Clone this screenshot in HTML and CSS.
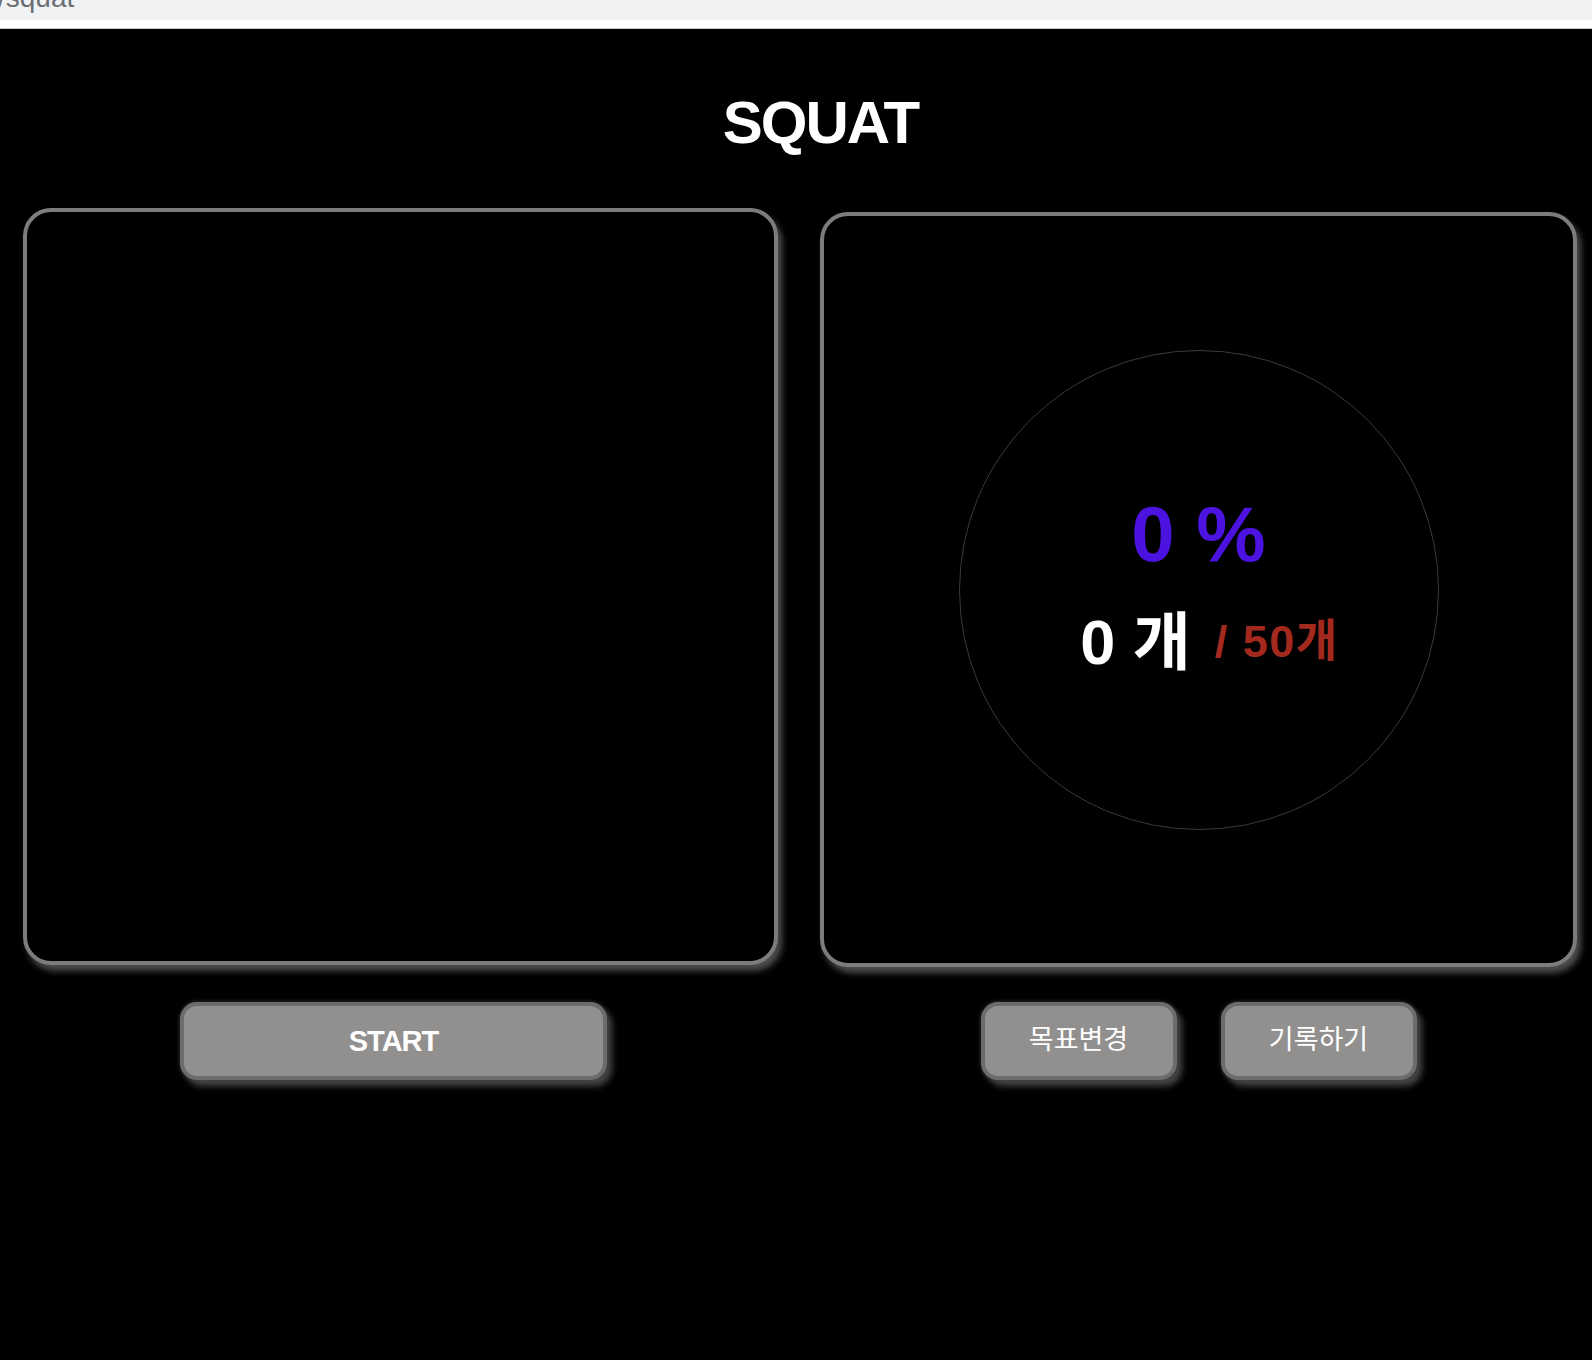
FILE: index.html
```html
<!DOCTYPE html>
<html lang="ko">
<head>
<meta charset="utf-8">
<title>Squat</title>
<link rel="stylesheet" href="styles.css">
</head>
<body>
<div class="chrome">
  <div class="chrome-bar"><span class="chrome-url">/squat</span></div>
  <div class="chrome-gap"></div>
</div>
<main class="page">
  <h1 class="title">SQUAT</h1>
  <div class="panels">
    <section class="panel panel-video"></section>
    <section class="panel panel-stats">
      <div class="ring">
        <div class="percent">0 %</div>
        <div class="count"><span class="count-now">0 개</span><span class="count-goal">/ 50개</span></div>
      </div>
    </section>
  </div>
  <div class="actions">
    <div class="action-col">
      <button class="btn btn-start">START</button>
    </div>
    <div class="action-col action-col-right">
      <button class="btn btn-small">목표변경</button>
      <button class="btn btn-small">기록하기</button>
    </div>
  </div>
</main>
</body>
</html>
```
FILE: styles.css
```css
html, body {
  margin: 0;
  padding: 0;
  background: #000;
}
body {
  width: 1592px;
  min-height: 1360px;
  font-family: "Liberation Sans", "Noto Sans CJK KR", sans-serif;
  color: #fff;
  overflow: hidden;
}
.chrome-bar {
  height: 20px;
  background: #f1f2f4;
  overflow: hidden;
}
.chrome-url {
  display: block;
  margin-top: -17px;
  margin-left: -2px;
  font-family: "Liberation Sans", sans-serif;
  font-size: 28px;
  line-height: 30px;
  color: #6b6e72;
}
.chrome-gap {
  height: 8px;
  background: #fff;
  border-bottom: 1px solid #c9c9c9;
}
.page {
  display: flex;
  flex-direction: column;
}
.title {
  margin: 64px 0 0 0;
  padding-left: 49px;
  text-align: center;
  font-family: "Liberation Sans", sans-serif;
  font-weight: 700;
  font-size: 60px;
  line-height: 60px;
  letter-spacing: -2px;
  height: 60px;
}
.panels {
  display: flex;
  align-items: flex-start;
  gap: 42px;
  margin-top: 55px;
  padding-left: 23px;
}
.panel {
  box-sizing: border-box;
  border: 4px solid #7c7c7c;
  border-radius: 28px;
  background: #000;
  box-shadow: 4px 6px 6px #4e4e4e;
}
.panel-video {
  width: 755px;
  height: 757px;
}
.panel-stats {
  width: 757px;
  height: 755px;
  margin-top: 4px;
  display: flex;
  align-items: center;
  justify-content: center;
}
.ring {
  box-sizing: border-box;
  width: 480px;
  height: 480px;
  border: 1px solid #3a3a3a;
  border-radius: 50%;
  display: flex;
  flex-direction: column;
  align-items: center;
  justify-content: center;
  padding-bottom: 8px;
}
.percent {
  font-family: "Liberation Sans", sans-serif;
  font-weight: 700;
  font-size: 78px;
  line-height: 80px;
  color: #4b12e0;
  white-space: pre;
}
.count {
  margin-top: 33px;
  padding-left: 22px;
  font-weight: 700;
  line-height: 70px;
  white-space: pre;
  display: flex;
  align-items: center;
  gap: 24px;
}
.count-now {
  font-size: 63px;
  color: #fff;
}
.count-goal {
  font-size: 45px;
  letter-spacing: 1.5px;
  color: #a3291f;
}
.actions {
  display: flex;
  gap: 42px;
  padding-left: 23px;
  margin-top: 35px;
}
.action-col {
  width: 755px;
  display: flex;
  justify-content: center;
}
.action-col-right {
  width: 757px;
  gap: 44px;
}
.btn {
  box-sizing: border-box;
  height: 78px;
  background: #92908f;
  border: 4px solid #6c6c6c;
  border-radius: 17px;
  color: #fff;
  box-shadow: 0 0 4px #3c3c3c, 5px 6px 6px #474747;
  padding: 0;
  cursor: pointer;
}
.btn-start {
  width: 427px;
  margin-right: 14px;
  font-family: "Liberation Sans", sans-serif;
  font-weight: 700;
  font-size: 29px;
  letter-spacing: -1px;
}
.btn-small {
  width: 196px;
  font-family: "Noto Sans CJK KR", sans-serif;
  font-weight: 400;
  font-size: 27px;
  line-height: 30px;
  padding-bottom: 6px;
}
```
